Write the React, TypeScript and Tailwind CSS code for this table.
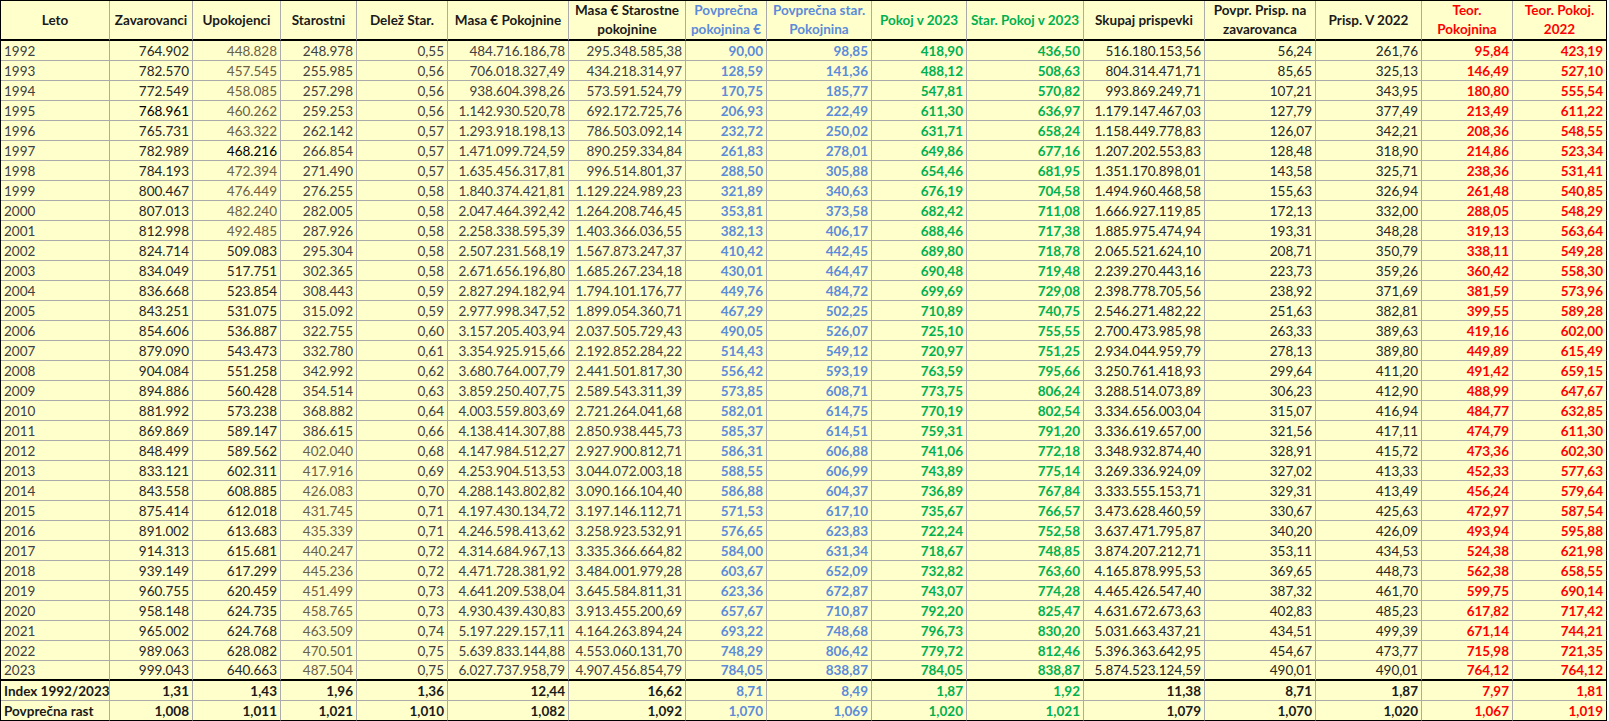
import React from 'react'

// column setup: width, header text colour, header content
const COLS: { w: string; head: React.ReactNode; hc: string }[] = [
    { w: 'w-[109px]', head: 'Leto', hc: 'text-[#1a1a1a]' },
    { w: 'w-[83px]', head: 'Zavarovanci', hc: 'text-[#1a1a1a]' },
    { w: 'w-[88px]', head: 'Upokojenci', hc: 'text-[#1a1a1a]' },
    { w: 'w-[76px]', head: 'Starostni', hc: 'text-[#1a1a1a]' },
    { w: 'w-[91px]', head: 'Delež Star.', hc: 'text-[#1a1a1a]' },
    { w: 'w-[121px]', head: 'Masa € Pokojnine', hc: 'text-[#1a1a1a]' },
    { w: 'w-[117px]', head: <>Masa € Starostne<br />pokojnine</>, hc: 'text-[#1a1a1a]' },
    { w: 'w-[81px]', head: <>Povprečna<br />pokojnina €</>, hc: 'text-[#5b8bd9]' },
    { w: 'w-[105px]', head: <>Povprečna star.<br />Pokojnina</>, hc: 'text-[#5b8bd9]' },
    { w: 'w-[95px]', head: 'Pokoj v 2023', hc: 'text-[#00b050]' },
    { w: 'w-[117px]', head: 'Star. Pokoj v 2023', hc: 'text-[#00b050]' },
    { w: 'w-[121px]', head: 'Skupaj prispevki', hc: 'text-[#1a1a1a]' },
    { w: 'w-[111px]', head: <>Povpr. Prisp. na<br />zavarovanca</>, hc: 'text-[#1a1a1a]' },
    { w: 'w-[106px]', head: 'Prisp. V 2022', hc: 'text-[#1a1a1a]' },
    { w: 'w-[91px]', head: <>Teor.<br />Pokojnina</>, hc: 'text-[#ff0000]' },
    { w: 'w-[94px]', head: <>Teor. Pokoj.<br />2022</>, hc: 'text-[#ff0000]' },
]

const RAW = `1992|764.902|448.828|248.978|0,55|484.716.186,78|295.348.585,38|90,00|98,85|418,90|436,50|516.180.153,56|56,24|261,76|95,84|423,19
1993|782.570|457.545|255.985|0,56|706.018.327,49|434.218.314,97|128,59|141,36|488,12|508,63|804.314.471,71|85,65|325,13|146,49|527,10
1994|772.549|458.085|257.298|0,56|938.604.398,26|573.591.524,79|170,75|185,77|547,81|570,82|993.869.249,71|107,21|343,95|180,80|555,54
1995|768.961|460.262|259.253|0,56|1.142.930.520,78|692.172.725,76|206,93|222,49|611,30|636,97|1.179.147.467,03|127,79|377,49|213,49|611,22
1996|765.731|463.322|262.142|0,57|1.293.918.198,13|786.503.092,14|232,72|250,02|631,71|658,24|1.158.449.778,83|126,07|342,21|208,36|548,55
1997|782.989|468.216|266.854|0,57|1.471.099.724,59|890.259.334,84|261,83|278,01|649,86|677,16|1.207.202.553,83|128,48|318,90|214,86|523,34
1998|784.193|472.394|271.490|0,57|1.635.456.317,81|996.514.801,37|288,50|305,88|654,46|681,95|1.351.170.898,01|143,58|325,71|238,36|531,41
1999|800.467|476.449|276.255|0,58|1.840.374.421,81|1.129.224.989,23|321,89|340,63|676,19|704,58|1.494.960.468,58|155,63|326,94|261,48|540,85
2000|807.013|482.240|282.005|0,58|2.047.464.392,42|1.264.208.746,45|353,81|373,58|682,42|711,08|1.666.927.119,85|172,13|332,00|288,05|548,29
2001|812.998|492.485|287.926|0,58|2.258.338.595,39|1.403.366.036,55|382,13|406,17|688,46|717,38|1.885.975.474,94|193,31|348,28|319,13|563,64
2002|824.714|509.083|295.304|0,58|2.507.231.568,19|1.567.873.247,37|410,42|442,45|689,80|718,78|2.065.521.624,10|208,71|350,79|338,11|549,28
2003|834.049|517.751|302.365|0,58|2.671.656.196,80|1.685.267.234,18|430,01|464,47|690,48|719,48|2.239.270.443,16|223,73|359,26|360,42|558,30
2004|836.668|523.854|308.443|0,59|2.827.294.182,94|1.794.101.176,77|449,76|484,72|699,69|729,08|2.398.778.705,56|238,92|371,69|381,59|573,96
2005|843.251|531.075|315.092|0,59|2.977.998.347,52|1.899.054.360,71|467,29|502,25|710,89|740,75|2.546.271.482,22|251,63|382,81|399,55|589,28
2006|854.606|536.887|322.755|0,60|3.157.205.403,94|2.037.505.729,43|490,05|526,07|725,10|755,55|2.700.473.985,98|263,33|389,63|419,16|602,00
2007|879.090|543.473|332.780|0,61|3.354.925.915,66|2.192.852.284,22|514,43|549,12|720,97|751,25|2.934.044.959,79|278,13|389,80|449,89|615,49
2008|904.084|551.258|342.992|0,62|3.680.764.007,79|2.441.501.817,30|556,42|593,19|763,59|795,66|3.250.761.418,93|299,64|411,20|491,42|659,15
2009|894.886|560.428|354.514|0,63|3.859.250.407,75|2.589.543.311,39|573,85|608,71|773,75|806,24|3.288.514.073,89|306,23|412,90|488,99|647,67
2010|881.992|573.238|368.882|0,64|4.003.559.803,69|2.721.264.041,68|582,01|614,75|770,19|802,54|3.334.656.003,04|315,07|416,94|484,77|632,85
2011|869.869|589.147|386.615|0,66|4.138.414.307,88|2.850.938.445,73|585,37|614,51|759,31|791,20|3.336.619.657,00|321,56|417,11|474,79|611,30
2012|848.499|589.562|402.040|0,68|4.147.984.512,27|2.927.900.812,71|586,31|606,88|741,06|772,18|3.348.932.874,40|328,91|415,72|473,36|602,30
2013|833.121|602.311|417.916|0,69|4.253.904.513,53|3.044.072.003,18|588,55|606,99|743,89|775,14|3.269.336.924,09|327,02|413,33|452,33|577,63
2014|843.558|608.885|426.083|0,70|4.288.143.802,82|3.090.166.104,40|586,88|604,37|736,89|767,84|3.333.555.153,71|329,31|413,49|456,24|579,64
2015|875.414|612.018|431.745|0,71|4.197.430.134,72|3.197.146.112,71|571,53|617,10|735,67|766,57|3.473.628.460,59|330,67|425,63|472,97|587,54
2016|891.002|613.683|435.339|0,71|4.246.598.413,62|3.258.923.532,91|576,65|623,83|722,24|752,58|3.637.471.795,87|340,20|426,09|493,94|595,88
2017|914.313|615.681|440.247|0,72|4.314.684.967,13|3.335.366.664,82|584,00|631,34|718,67|748,85|3.874.207.212,71|353,11|434,53|524,38|621,98
2018|939.149|617.299|445.236|0,72|4.471.728.381,92|3.484.001.979,28|603,67|652,09|732,82|763,60|4.165.878.995,53|369,65|448,73|562,38|658,55
2019|960.755|620.459|451.499|0,73|4.641.209.538,04|3.645.584.811,31|623,36|672,87|743,07|774,28|4.465.426.547,40|387,32|461,70|599,75|690,14
2020|958.148|624.735|458.765|0,73|4.930.439.430,83|3.913.455.200,69|657,67|710,87|792,20|825,47|4.631.672.673,63|402,83|485,23|617,82|717,42
2021|965.002|624.768|463.509|0,74|5.197.229.157,11|4.164.263.894,24|693,22|748,68|796,73|830,20|5.031.663.437,21|434,51|499,39|671,14|744,21
2022|989.063|628.082|470.501|0,75|5.639.833.144,88|4.553.060.131,70|748,29|806,42|779,72|812,46|5.396.363.642,95|454,67|473,77|715,98|721,35
2023|999.043|640.663|487.504|0,75|6.027.737.958,79|4.907.456.854,79|784,05|838,87|784,05|838,87|5.874.523.124,59|490,01|490,01|764,12|764,12`

const ROWS = RAW.split('\n').map(l => l.split('|'))

const FOOT = [
    ['Index 1992/2023', '1,31', '1,43', '1,96', '1,36', '12,44', '16,62', '8,71', '8,49', '1,87', '1,92', '11,38', '8,71', '1,87', '7,97', '1,81'],
    ['Povprečna rast', '1,008', '1,011', '1,021', '1,010', '1,082', '1,092', '1,070', '1,069', '1,020', '1,021', '1,079', '1,070', '1,020', '1,067', '1,019'],
]

const DARK = 'text-[#262626]'
const MID = 'text-[#404040]'
const LIGHT = 'text-[#6b6148]'
const BLUE = 'text-[#5b8bd9] font-bold'
const GREEN = 'text-[#00b050] font-bold'
const RED = 'text-[#ff0000] font-bold'

function accent(c: number) {
    if (c === 7 || c === 8) return BLUE
    if (c === 9 || c === 10) return GREEN
    if (c === 14 || c === 15) return RED
    return null
}

// Excel sheet uses a few different greys per column / row
function tone(c: number, year: number) {
    const a = accent(c)
    if (a) return a
    if (c === 1) return year === 1995 ? 'text-black' : DARK
    if (c === 2) return year === 1997 ? 'text-black' : year <= 2001 ? LIGHT : DARK
    if (c === 3) return year >= 2012 ? LIGHT : MID
    if (c >= 11) return DARK
    return MID
}

export default function App() {
    const last = COLS.length - 1
    return (
        <div className="min-h-screen bg-white font-[Lato,'Liberation_Sans',sans-serif] text-[13.5px]">
            <div className="w-fit border-l border-t border-black">
                <table className="table-fixed border-separate border-spacing-0 w-[1606px]">
                    <colgroup>
                        {COLS.map((c, i) => <col key={i} className={c.w} />)}
                    </colgroup>
                    <thead>
                        <tr>
                            {COLS.map((c, i) => (
                                <th
                                    key={i}
                                    className={`h-[39px] p-0 px-[2px] bg-[#ffffcc] font-bold text-center align-middle leading-[19px] border-b-2 border-r border-b-black ${i === last ? 'border-r-black' : 'border-r-[#ababab]'} ${c.hc}`}
                                >
                                    {c.head}
                                </th>
                            ))}
                        </tr>
                    </thead>
                    <tbody>
                        {ROWS.map((r, ri) => {
                            const year = Number(r[0])
                            const lastRow = ri === ROWS.length - 1
                            return (
                                <tr key={ri}>
                                    {r.map((v, ci) => (
                                        <td
                                            key={ci}
                                            className={`h-[20px] p-0 px-[3px] bg-[#ffffcc] leading-[18px] whitespace-nowrap border-r border-b ${ci === 0 ? 'text-left' : 'text-right'} ${ci === last ? 'border-r-black' : 'border-r-[#ababab]'} ${lastRow ? 'border-b-2 border-b-black' : 'border-b-[#ababab]'} ${tone(ci, year)}`}
                                        >
                                            {v}
                                        </td>
                                    ))}
                                </tr>
                            )
                        })}
                        {FOOT.map((r, ri) => (
                            <tr key={'f' + ri}>
                                {r.map((v, ci) => (
                                    <td
                                        key={ci}
                                        className={`h-[20px] p-0 px-[3px] bg-[#ffffcc] leading-[18px] whitespace-nowrap font-bold border-r border-b ${ci === 0 ? 'text-left' : 'text-right'} ${ci === last ? 'border-r-black' : 'border-r-[#ababab]'} ${ri === 1 ? 'border-b-black' : 'border-b-[#ababab]'} ${accent(ci) ?? 'text-[#1a1a1a]'}`}
                                    >
                                        {v}
                                    </td>
                                ))}
                            </tr>
                        ))}
                    </tbody>
                </table>
            </div>
        </div>
    )
}
